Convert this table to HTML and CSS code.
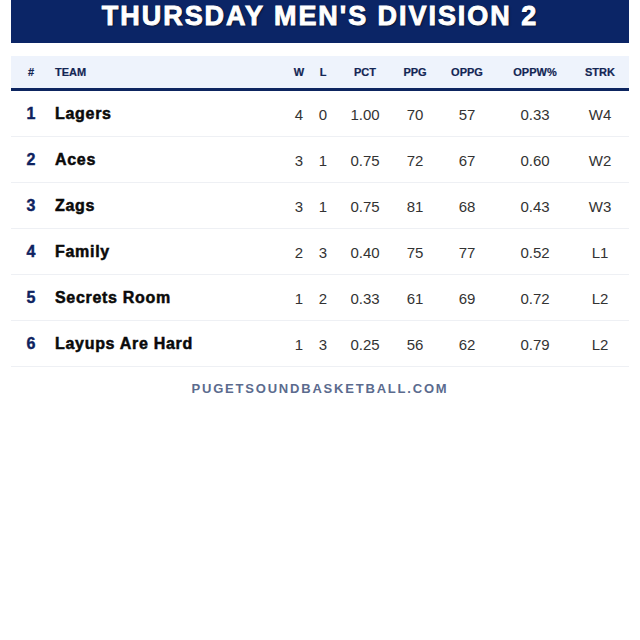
FILE: index.html
```html
<!DOCTYPE html>
<html lang="en">
<head>
<meta charset="utf-8">
<title>Thursday Men's Division 2</title>
<link rel="stylesheet" href="styles.css">
</head>
<body>
<div class="page">
  <header class="title-bar"><h1 class="title">THURSDAY MEN'S DIVISION 2</h1></header>
  <table class="standings">
    <colgroup>
      <col class="c-rank"><col class="c-team"><col class="c-w"><col class="c-l"><col class="c-pct"><col class="c-ppg"><col class="c-oppg"><col class="c-oppw"><col class="c-strk">
    </colgroup>
    <thead>
      <tr>
        <th>#</th><th class="left">TEAM</th><th>W</th><th>L</th><th>PCT</th><th>PPG</th><th>OPPG</th><th>OPPW%</th><th>STRK</th>
      </tr>
    </thead>
    <tbody>
      <tr><td class="rank">1</td><td class="team">Lagers</td><td>4</td><td>0</td><td>1.00</td><td>70</td><td>57</td><td>0.33</td><td>W4</td></tr>
      <tr><td class="rank">2</td><td class="team">Aces</td><td>3</td><td>1</td><td>0.75</td><td>72</td><td>67</td><td>0.60</td><td>W2</td></tr>
      <tr><td class="rank">3</td><td class="team">Zags</td><td>3</td><td>1</td><td>0.75</td><td>81</td><td>68</td><td>0.43</td><td>W3</td></tr>
      <tr><td class="rank">4</td><td class="team">Family</td><td>2</td><td>3</td><td>0.40</td><td>75</td><td>77</td><td>0.52</td><td>L1</td></tr>
      <tr><td class="rank">5</td><td class="team">Secrets Room</td><td>1</td><td>2</td><td>0.33</td><td>61</td><td>69</td><td>0.72</td><td>L2</td></tr>
      <tr><td class="rank">6</td><td class="team">Layups Are Hard</td><td>1</td><td>3</td><td>0.25</td><td>56</td><td>62</td><td>0.79</td><td>L2</td></tr>
    </tbody>
  </table>
  <footer class="footer">PUGETSOUNDBASKETBALL.COM</footer>
</div>
</body>
</html>
```
FILE: styles.css
```css
html, body {
  margin: 0;
  padding: 0;
  background: #ffffff;
}
body {
  font-family: "Liberation Sans", Arial, sans-serif;
  color: #333333;
}
.page {
  padding: 0 11px;
}
.title-bar {
  background: #0b2566;
  height: 43px;
  display: flex;
  justify-content: center;
  align-items: flex-start;
  margin-bottom: 13px;
}
.title {
  margin: 0;
  padding-top: 1px;
  color: #ffffff;
  font-size: 27px;
  font-weight: 700;
  letter-spacing: 1.95px;
  line-height: 30px;
  -webkit-text-stroke: 0.9px #ffffff;
  text-shadow: 1px 1px 2px rgba(0, 0, 0, 0.7);
}
.standings {
  width: 100%;
  border-collapse: collapse;
  table-layout: fixed;
}
.c-rank { width: 40px; }
.c-w { width: 24px; }
.c-l { width: 24px; }
.c-pct { width: 60px; }
.c-ppg { width: 40px; }
.c-oppg { width: 64px; }
.c-oppw { width: 72px; }
.c-strk { width: 58px; }
.standings thead tr {
  background: #eef3fc;
  border-bottom: 3px solid #0d2560;
}
.standings th {
  height: 32px;
  padding: 0;
  font-size: 11px;
  font-weight: 700;
  color: #132654;
  text-align: center;
  vertical-align: middle;
  -webkit-text-stroke: 0.2px #132654;
}
.standings th.left {
  text-align: left;
  padding-left: 4px;
}
.standings tbody tr {
  border-bottom: 1px solid #eef0f4;
}
.standings td {
  height: 43px;
  padding: 2px 0 0;
  font-size: 15px;
  text-align: center;
  vertical-align: middle;
  color: #333333;
}
.standings td.rank {
  font-size: 16px;
  font-weight: 700;
  color: #0e2260;
  padding-top: 0;
  -webkit-text-stroke: 0.4px #0e2260;
}
.standings td.team {
  text-align: left;
  padding: 0 0 0 4px;
  font-size: 16px;
  font-weight: 700;
  letter-spacing: 0.7px;
  color: #0a0a0a;
  -webkit-text-stroke: 0.5px #0a0a0a;
}
.footer {
  padding-top: 14px;
  text-align: center;
  font-size: 13px;
  font-weight: 700;
  letter-spacing: 1.8px;
  color: #5b6b8e;
}
```
